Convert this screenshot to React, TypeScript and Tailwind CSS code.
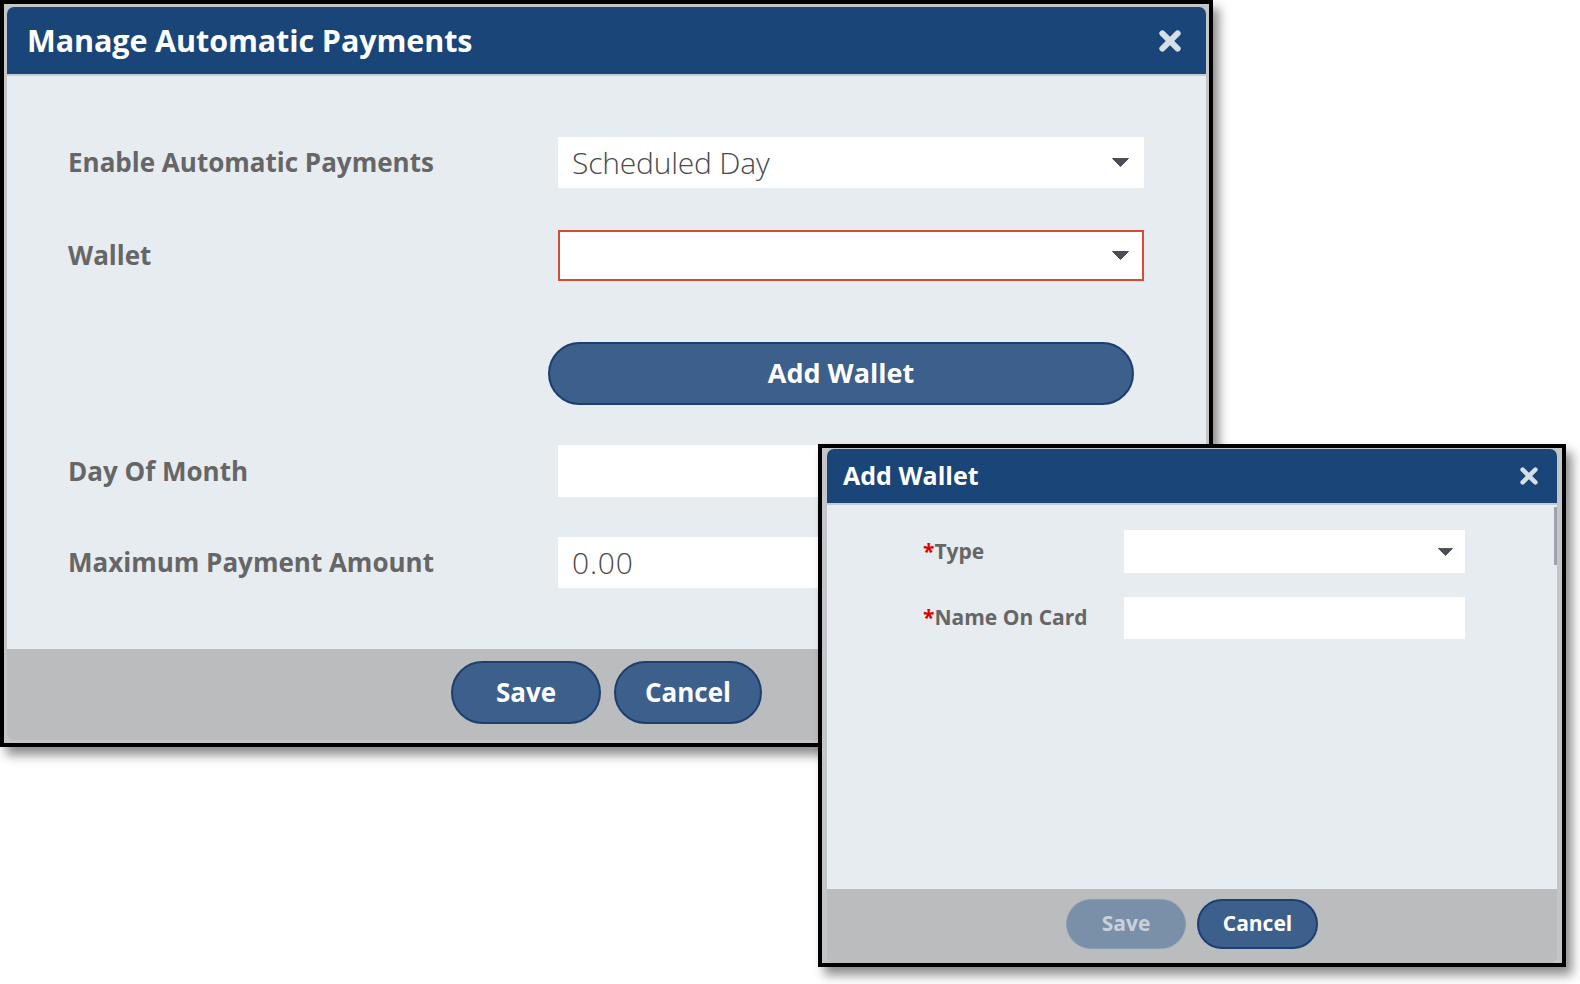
import React from "react";

const Caret = ({ w = 17, h = 9 }: { w?: number; h?: number }) => (
  <svg width={w} height={h} viewBox="0 0 17 9" className="shrink-0">
    <path d="M0.5 0.5H16.5L8.5 8.5Z" fill="#4b4e57" stroke="#4b4e57" strokeLinejoin="round" />
  </svg>
);

const CloseX = ({ size, stroke }: { size: number; stroke: number }) => (
  <svg width={size} height={size} viewBox="0 0 22 22">
    <path d="M4 4L18 18M18 4L4 18" stroke="#d6dee8" strokeWidth={stroke} strokeLinecap="round" />
  </svg>
);

function MainDialog() {
  return (
    <div className="w-[1213px] h-[747px] border-4 border-black bg-[#c3c5c8] p-[3px] shadow-[6px_8px_10px_rgba(0,0,0,0.45)]">
      <div className="flex flex-col h-full rounded-[7px] overflow-hidden">
        <div className="h-[69px] shrink-0 bg-[#1a4578] border-b-2 border-[#c6ccd3] flex items-center justify-between pl-[20px] pr-[24px]">
          <span className="text-white text-[30.5px] font-bold tracking-[-0.1px]">Manage Automatic Payments</span>
          <CloseX size={24} stroke={5.5} />
        </div>
        <div className="flex-1 bg-[#e7ecf0] pt-[61px] pl-[61px] flex flex-col">
          <div className="flex items-center h-[51px]">
            <div className="w-[490px] text-[26px] font-bold text-[#666]">Enable Automatic Payments</div>
            <div className="w-[586px] h-[51px] bg-white flex items-center justify-between pl-[14px] pr-[15px]">
              <span className="text-[30px] font-light text-[#4a4a4a] tracking-[-0.2px]">Scheduled Day</span>
              <Caret />
            </div>
          </div>
          <div className="flex items-center h-[51px] mt-[42px]">
            <div className="w-[490px] text-[26px] font-bold text-[#666]">Wallet</div>
            <div className="w-[586px] h-[51px] bg-white border-2 border-[#d64b33] flex items-center justify-end pr-[13px]">
              <Caret />
            </div>
          </div>
          <div className="flex mt-[61px] pl-[480px]">
            <button className="w-[586px] h-[63px] rounded-full bg-[#3c5f8c] border-2 border-[#1d3f6f] text-white text-[27px] font-bold">
              Add Wallet
            </button>
          </div>
          <div className="flex items-center h-[52px] mt-[40px]">
            <div className="w-[490px] text-[26px] font-bold text-[#666]">Day Of Month</div>
            <div className="w-[586px] h-[52px] bg-white" />
          </div>
          <div className="flex items-center h-[51px] mt-[40px]">
            <div className="w-[490px] text-[26px] font-bold text-[#666]">Maximum Payment Amount</div>
            <div className="w-[586px] h-[51px] bg-white flex items-center pl-[14px]">
              <span className="text-[30px] font-light text-[#4a4a4a] tracking-[0.8px]">0.00</span>
            </div>
          </div>
        </div>
        <div className="h-[91px] shrink-0 bg-[#bbbcbe] flex justify-center items-start pt-[12px] gap-[13px]">
          <button className="w-[150px] h-[63px] rounded-full bg-[#3c5f8c] border-2 border-[#1d3f6f] text-white text-[26px] font-bold">
            Save
          </button>
          <button className="w-[148px] h-[63px] rounded-full bg-[#3c5f8c] border-2 border-[#1d3f6f] text-white text-[26px] font-bold">
            Cancel
          </button>
        </div>
      </div>
    </div>
  );
}

function WalletDialog() {
  return (
    <div className="absolute left-[818px] top-[444px] w-[748px] h-[523px] border-4 border-black bg-[#c3c5c8] pt-[1px] pl-[5px] pr-[5px] shadow-[6px_8px_10px_rgba(0,0,0,0.45)]">
      <div className="relative flex flex-col h-full rounded-[7px] overflow-hidden">
        <div className="h-[56px] shrink-0 bg-[#1a4578] border-b-2 border-[#c6ccd3] flex items-center justify-between pl-[16px] pr-[18px]">
          <span className="text-white text-[25px] font-bold">Add Wallet</span>
          <CloseX size={20} stroke={5} />
        </div>
        <div className="flex-1 bg-[#e7ecf0] pt-[25px] pl-[96px] flex flex-col">
          <div className="flex items-center h-[43px]">
            <div className="w-[201px] text-[21px] font-bold text-[#666]">
              <span className="text-[#e00000]">*</span>Type
            </div>
            <div className="w-[341px] h-[43px] bg-white flex items-center justify-end pr-[12px]">
              <Caret w={15} h={8} />
            </div>
          </div>
          <div className="flex items-center h-[42px] mt-[24px]">
            <div className="w-[201px] text-[21px] font-bold text-[#666]">
              <span className="text-[#e00000]">*</span>Name On Card
            </div>
            <div className="w-[341px] h-[42px] bg-white" />
          </div>
        </div>
        <div className="h-[74px] shrink-0 bg-[#bbbcbe] flex justify-center items-start pt-[10px] gap-[11px]">
          <button className="w-[120px] h-[50px] rounded-full bg-[#7a8fa8] border border-[#8b9db3] text-[#c9d0d9] text-[21px] font-bold">
            Save
          </button>
          <button className="w-[121px] h-[50px] rounded-full bg-[#3c5f8c] border-2 border-[#1d3f6f] text-white text-[21px] font-bold">
            Cancel
          </button>
        </div>
        <div className="absolute right-0 top-[58px] w-[3px] h-[58px] bg-[#9ea3a9]" />
      </div>
    </div>
  );
}

export default function App() {
  return (
    <div className="relative w-[1580px] h-[984px] bg-white overflow-hidden font-['Open_Sans','Noto_Sans',sans-serif]">
      <MainDialog />
      <WalletDialog />
    </div>
  );
}
